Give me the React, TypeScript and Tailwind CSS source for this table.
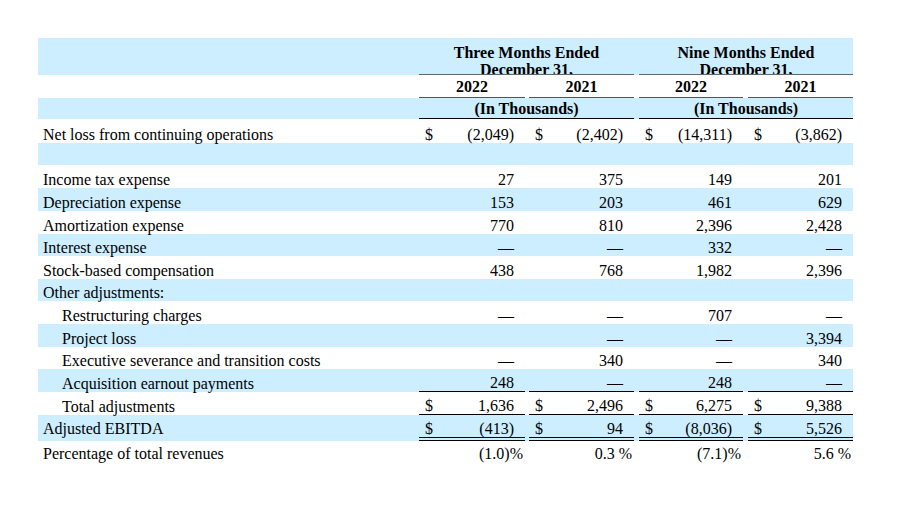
const cols = "grid grid-cols-[381px_106px_4px_105px_5px_104px_5px_105px]";

type Row = {
  label: string;
  h: string;
  blue?: boolean;
  indent?: boolean;
  values?: string[];
  dollars?: boolean;
  line?: "single" | "double";
  pct?: boolean;
};

const rows: Row[] = [
  { label: "Net loss from continuing operations", h: "h-[24px]", values: ["(2,049)", "(2,402)", "(14,311)", "(3,862)"], dollars: true },
  { label: "", h: "h-[22px]", blue: true },
  { label: "Income tax expense", h: "h-[23px]", values: ["27", "375", "149", "201"] },
  { label: "Depreciation expense", h: "h-[23px]", blue: true, values: ["153", "203", "461", "629"] },
  { label: "Amortization expense", h: "h-[23px]", values: ["770", "810", "2,396", "2,428"] },
  { label: "Interest expense", h: "h-[22px]", blue: true, values: ["—", "—", "332", "—"] },
  { label: "Stock-based compensation", h: "h-[23px]", values: ["438", "768", "1,982", "2,396"] },
  { label: "Other adjustments:", h: "h-[22px]", blue: true },
  { label: "Restructuring charges", h: "h-[23px]", indent: true, values: ["—", "—", "707", "—"] },
  { label: "Project loss", h: "h-[23px]", indent: true, blue: true, values: ["", "—", "—", "3,394"] },
  { label: "Executive severance and transition costs", h: "h-[22px]", indent: true, values: ["—", "340", "—", "340"] },
  { label: "Acquisition earnout payments", h: "h-[23px]", indent: true, blue: true, values: ["248", "—", "248", "—"], line: "single" },
  { label: "Total adjustments", h: "h-[23px]", indent: true, values: ["1,636", "2,496", "6,275", "9,388"], dollars: true, line: "single" },
  { label: "Adjusted EBITDA", h: "h-[26px]", blue: true, values: ["(413)", "94", "(8,036)", "5,526"], dollars: true, line: "double" },
  { label: "Percentage of total revenues", h: "h-[21px]", values: ["(1.0)%", "0.3 %", "(7.1)%", "5.6 %"], pct: true },
];

function Cell({ value, dollar, line, pct }: { value: string; dollar?: boolean; line?: Row["line"]; pct?: boolean }) {
  const border =
    line === "double" ? "border-b-[4px] border-double border-black" : line === "single" ? "border-b border-black" : "";
  return (
    <div className={`flex items-end ${border}`}>
      {dollar && <span className="pl-[6px]">$</span>}
      <span className={`flex-1 text-right whitespace-pre ${pct ? "pr-[2px]" : "pr-[11px]"}`}>{value}</span>
    </div>
  );
}

export default function App() {
  return (
    <div className="min-h-screen bg-white pt-[38px] pl-[38px] text-black text-[16px] leading-[17px] font-['Liberation_Serif',serif]">
      <div className="w-[815px]">
        <div className={`${cols} h-[37px] bg-[#cceeff] font-bold`}>
          <div />
          <div className="col-span-3 h-[37px] overflow-hidden border-b border-[#666] pt-[6px] text-center">
            Three Months Ended
            <br />
            December 31,
          </div>
          <div />
          <div className="col-span-3 h-[37px] overflow-hidden border-b border-[#666] pt-[6px] text-center">
            Nine Months Ended
            <br />
            December 31,
          </div>
        </div>
        <div className={`${cols} h-[23px] font-bold`}>
          <div />
          <div className="flex items-end justify-center border-b border-[#555] pb-[2px]">2022</div>
          <div />
          <div className="flex items-end justify-center border-b border-[#555] pb-[2px]">2021</div>
          <div />
          <div className="flex items-end justify-center border-b border-[#555] pb-[2px]">2022</div>
          <div />
          <div className="flex items-end justify-center border-b border-[#555] pb-[2px]">2021</div>
        </div>
        <div className={`${cols} h-[21px] bg-[#cceeff] font-bold`}>
          <div />
          <div className="col-span-3 flex items-end justify-center border-b border-black pb-[1px]">(In Thousands)</div>
          <div />
          <div className="col-span-3 flex items-end justify-center border-b border-black pb-[1px]">(In Thousands)</div>
        </div>
        {rows.map((r, i) => (
          <div key={i} className={`${cols} ${r.h} ${r.blue ? "bg-[#cceeff]" : ""}`}>
            <div className={`flex items-end ${r.line === "double" ? "pb-[4px]" : ""} ${r.indent ? "pl-[24px]" : "pl-[5px]"}`}>{r.label}</div>
            {r.values ? (
              <>
                <Cell value={r.values[0]} dollar={r.dollars} line={r.line} pct={r.pct} />
                <div />
                <Cell value={r.values[1]} dollar={r.dollars} line={r.line} pct={r.pct} />
                <div />
                <Cell value={r.values[2]} dollar={r.dollars} line={r.line} pct={r.pct} />
                <div />
                <Cell value={r.values[3]} dollar={r.dollars} line={r.line} pct={r.pct} />
              </>
            ) : null}
          </div>
        ))}
      </div>
    </div>
  );
}
